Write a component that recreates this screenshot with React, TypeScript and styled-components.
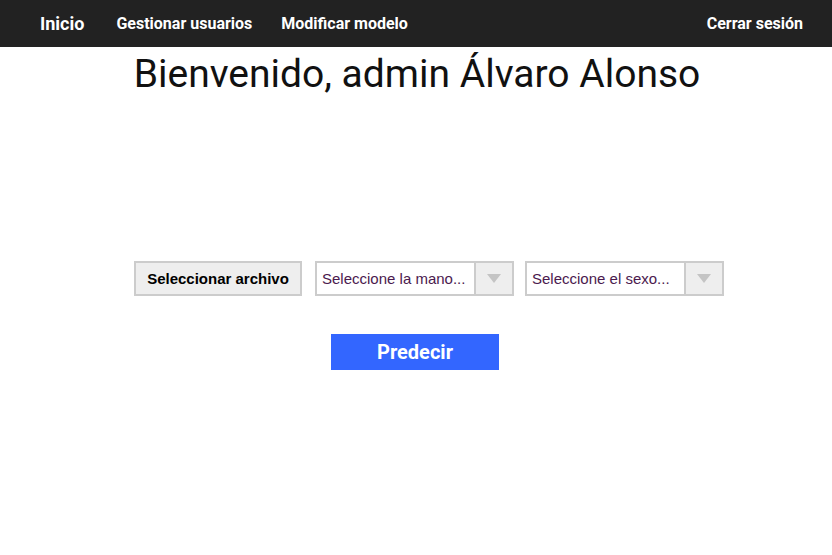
import styled, { createGlobalStyle } from 'styled-components';

const GlobalStyle = createGlobalStyle`
  body {
    margin: 0;
    background: #fff;
    font-family: Roboto, "Liberation Sans", Arial, sans-serif;
  }
`;

const App = () => {
  return (
    <>
      <GlobalStyle />
      <NavBar>
        <NavLeft>
          <Brand>Inicio</Brand>
          <NavLink>Gestionar usuarios</NavLink>
          <NavLink>Modificar modelo</NavLink>
        </NavLeft>
        <NavLink>Cerrar sesión</NavLink>
      </NavBar>
      <Main>
        <Title>Bienvenido, admin Álvaro Alonso</Title>
        <Controls>
          <FileButton type="button">Seleccionar archivo</FileButton>
          <Select>
            <SelectText>Seleccione la mano...</SelectText>
            <Arrow>
              <svg width="14" height="9" viewBox="0 0 14 9">
                <path d="M0 0h14L7 9z" fill="#c4c4c4" />
              </svg>
            </Arrow>
          </Select>
          <Select>
            <SelectText>Seleccione el sexo...</SelectText>
            <Arrow>
              <svg width="14" height="9" viewBox="0 0 14 9">
                <path d="M0 0h14L7 9z" fill="#c4c4c4" />
              </svg>
            </Arrow>
          </Select>
        </Controls>
        <PredictButton type="button">Predecir</PredictButton>
      </Main>
    </>
  );
};

export default App;

const NavBar = styled.nav`
  display: flex;
  align-items: center;
  justify-content: space-between;
  height: 47px;
  padding: 0 29px 0 40px;
  background: #222222;
`;

const NavLeft = styled.div`
  display: flex;
  align-items: center;
  gap: 29px;
`;

const NavLink = styled.a`
  color: #fff;
  font-family: Roboto, "Liberation Sans", sans-serif;
  font-size: 16px;
  font-weight: 700;
  cursor: pointer;
`;

const Brand = styled(NavLink)`
  font-size: 18px;
  margin-right: 3px;
`;

const Main = styled.main`
  display: flex;
  flex-direction: column;
  align-items: center;
`;

const Title = styled.h1`
  margin: 4px 0 0 2px;
  color: #111;
  font-family: Roboto, "Liberation Sans", sans-serif;
  font-size: 39px;
  font-weight: 400;
  line-height: 47px;
`;

const Controls = styled.div`
  display: flex;
  gap: 11px;
  margin: 163px 0 0 26px;
`;

const FileButton = styled.button`
  width: 168px;
  height: 35px;
  margin-right: 2px;
  padding: 0;
  background: #eeeeee;
  border: 2px solid #cccccc;
  color: #000;
  font-family: "Liberation Sans", Arial, sans-serif;
  font-size: 15px;
  font-weight: 700;
`;

const Select = styled.div`
  display: flex;
  align-items: stretch;
  width: 199px;
  height: 35px;
  box-sizing: border-box;
  border: 2px solid #cccccc;
  background: #fff;
`;

const SelectText = styled.span`
  flex: 1;
  display: flex;
  align-items: center;
  padding-left: 5px;
  color: #4b1a4e;
  font-family: "Liberation Sans", Arial, sans-serif;
  font-size: 15px;
`;

const Arrow = styled.span`
  display: flex;
  align-items: center;
  justify-content: center;
  width: 36px;
  background: #eeeeee;
  border-left: 2px solid #cccccc;
`;

const PredictButton = styled.button`
  width: 168px;
  height: 36px;
  margin: 38px 2px 0 0;
  border: none;
  background: #3366ff;
  color: #fff;
  font-family: Roboto, "Liberation Sans", sans-serif;
  font-size: 20px;
  font-weight: 700;
`;
